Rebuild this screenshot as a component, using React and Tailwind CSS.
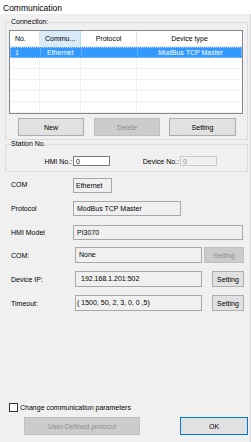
import React from 'react';

const font = { fontFamily: '"Liberation Sans", Arial, sans-serif' };

const ReadBox = ({ w, h = 'h-[15px]', children, pl = 'pl-[3px]' }) => (
  <div
    className={`${w} ${h} ${pl} border border-[#a8a8a8] bg-[#f0f0f0] flex items-start pt-[2px] leading-[9px] whitespace-nowrap overflow-hidden`}
  >
    {children}
  </div>
);

const Btn = ({ w, h = 'h-[18px]', disabled, children, primary }) => (
  <div
    className={`${w} ${h} flex items-center justify-center leading-[9px] border ${
      disabled
        ? 'bg-[#cccccc] border-[#bfbfbf] text-[#8f8f8f]'
        : primary
        ? 'bg-[#e1e1e1] border-[#0078d7] text-black'
        : 'bg-[#e1e1e1] border-[#adadad] text-black'
    }`}
  >
    {children}
  </div>
);

const rows = [0, 1, 2, 3, 4, 5];

export default function App() {
  return (
    <div className="w-[251px] h-[442px] flex flex-col text-[7px] text-black bg-[#f0f0f0]" style={font}>
      {/* Title */}
      <div className="h-[14px] bg-white pl-[3px] pt-[4px] text-[8.5px] leading-[9px]">Communication</div>

      <div className="flex-1 flex flex-col border-r border-[#d9d9d9]">
        {/* Connection group */}
        <fieldset className="mt-[4px] ml-[5px] w-[243px] border border-[#dcdcdc] pl-[3px] pt-[4px] pb-[3px]">
          <legend className="ml-[1px] px-[1px] leading-[8px]">Connection:</legend>

          <div className="w-[234px] h-[84px] border border-[#828790] bg-white flex flex-col overflow-hidden">
            <div className="h-[16px] grid grid-cols-[30px_41px_56px_105px] leading-[9px] border-b border-[#e5e5e5]">
              <div className="pl-[5px] flex items-center border-r border-[#e5e5e5]">No.</div>
              <div className="pl-[5px] flex items-center bg-[#d9ebf9] border-r border-[#bcdcf4]">Commu...</div>
              <div className="flex items-center justify-center border-r border-[#e5e5e5]">Protocol</div>
              <div className="flex items-center justify-center">Device type</div>
            </div>
            {rows.map((r) => (
              <div
                key={r}
                className={`h-[11px] grid grid-cols-[30px_41px_56px_105px] leading-[9px] ${
                  r === 0
                    ? 'bg-[#3399ff] text-white border border-dotted border-[#a6d2ff]'
                    : 'border-b border-[#f0f0f0]'
                }`}
              >
                <div className={`pl-[4px] flex items-center ${r === 0 ? 'border-r border-[#5aadff]' : 'border-r border-[#f0f0f0]'}`}>
                  {r === 0 ? '1' : ''}
                </div>
                <div className={`pl-[6px] flex items-center ${r === 0 ? 'border-r border-[#5aadff]' : 'border-r border-[#f0f0f0]'}`}>
                  {r === 0 ? 'Ethernet' : ''}
                </div>
                <div className={`flex items-center ${r === 0 ? 'border-r border-[#5aadff]' : 'border-r border-[#f0f0f0]'}`}></div>
                <div className="flex items-center justify-center">{r === 0 ? 'ModBus TCP Master' : ''}</div>
              </div>
            ))}
          </div>

          <div className="mt-[4px] flex pl-[9px]">
            <Btn w="w-[66px]">New</Btn>
            <div className="ml-[10px]">
              <Btn w="w-[66px]" disabled>Delete</Btn>
            </div>
            <div className="ml-[9px]">
              <Btn w="w-[67px]">Setting</Btn>
            </div>
          </div>
        </fieldset>

        {/* Station group */}
        <fieldset className="ml-[5px] w-[243px] border border-[#dcdcdc] pl-[3px] pt-[8px] pb-[5px]">
          <legend className="ml-[1px] px-[1px] leading-[8px]">Station No.</legend>
          <div className="h-[10px] flex items-center leading-[9px]">
            <div className="w-[64px] text-right pr-[1px]">HMI No.:</div>
            <div className="w-[37px] h-[10px] border border-[#7a7a7a] bg-white pl-[2px] flex items-center">0</div>
            <div className="w-[70px] text-right pr-[1px]">Device No.:</div>
            <div className="w-[37px] h-[10px] border border-[#cccccc] bg-[#f0f0f0] text-[#8f8f8f] pl-[2px] flex items-center">0</div>
          </div>
        </fieldset>

        {/* Parameters */}
        <div className="pl-[11px] flex flex-col leading-[9px]">
          <div className="mt-[6px] flex items-center">
            <div className="w-[62px] -mt-[3px]">COM</div>
            <ReadBox w="w-[39px]" pl="pl-[2px]">Ethernet</ReadBox>
          </div>
          <div className="mt-[8px] flex items-center">
            <div className="w-[62px]">Protocol</div>
            <ReadBox w="w-[108px]">ModBus TCP Master</ReadBox>
          </div>
          <div className="mt-[9px] flex items-center">
            <div className="w-[62px]">HMI Model</div>
            <ReadBox w="w-[170px]">PI3070</ReadBox>
          </div>
          <div className="mt-[7px] flex items-center">
            <div className="w-[64px]">COM:</div>
            <ReadBox w="w-[127px]" h="h-[16px]">None</ReadBox>
            <div className="ml-[2px]">
              <Btn w="w-[40px]" h="h-[16px]" disabled>Setting</Btn>
            </div>
          </div>
          <div className="mt-[8px] flex items-center">
            <div className="w-[64px]">Device IP:</div>
            <ReadBox w="w-[127px]" h="h-[16px]" pl="pl-[5px]">192.168.1.201:502</ReadBox>
            <div className="ml-[10px]">
              <Btn w="w-[32px]" h="h-[16px]">Setting</Btn>
            </div>
          </div>
          <div className="mt-[8px] flex items-center">
            <div className="w-[64px]">Timeout:</div>
            <ReadBox w="w-[127px]" h="h-[16px]" pl="pl-[1px]">( 1500, 50, 2, 3, 0, 0 ,5)</ReadBox>
            <div className="ml-[10px]">
              <Btn w="w-[32px]" h="h-[16px]">Setting</Btn>
            </div>
          </div>
        </div>

        {/* Bottom */}
        <div className="mt-[92px] pl-[9px] h-[9px] flex items-center leading-[9px]">
          <div className="w-[9px] h-[9px] border border-[#333333] bg-white"></div>
          <div className="ml-[2px]">Change communication parameters</div>
        </div>
        <div className="mt-[5px] flex pl-[24px] leading-[9px]">
          <Btn w="w-[116px]" disabled>User-Defined protocol</Btn>
          <div className="ml-[40px]">
            <Btn w="w-[68px]" primary>OK</Btn>
          </div>
        </div>
      </div>
    </div>
  );
}
